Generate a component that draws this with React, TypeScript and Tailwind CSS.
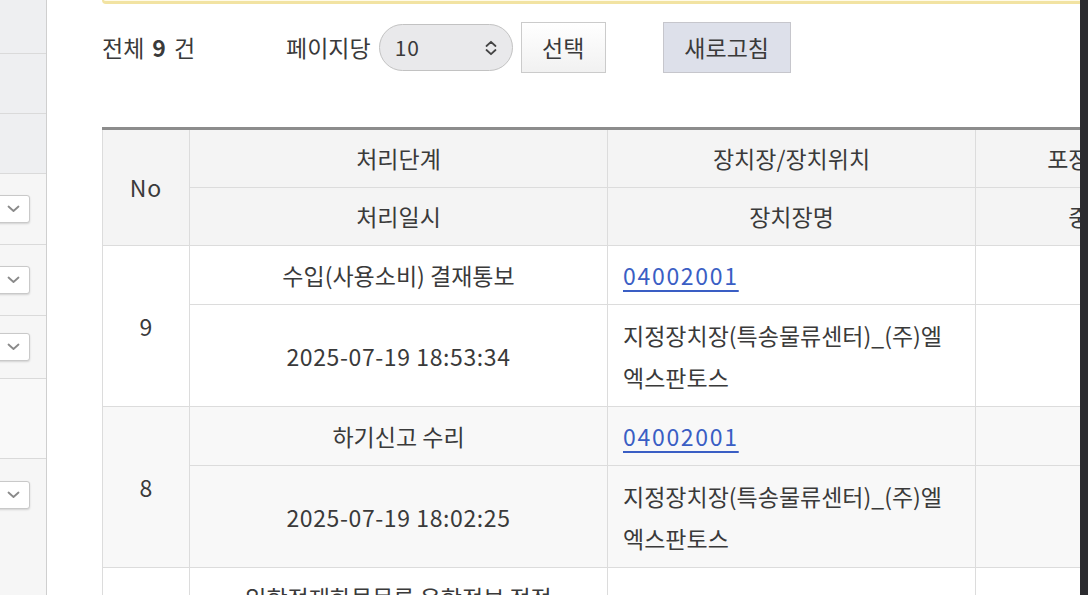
import React from 'react';

const font = { fontFamily: '"Noto Sans CJK KR", "Noto Sans", sans-serif' };

function SideSelect() {
  return (
    <div className="-ml-3 flex h-[28px] w-[42px] items-center justify-end rounded-[3px] border border-[#c9c9c9] bg-white pr-[9px] shadow-[0_1px_2px_rgba(0,0,0,0.15)]">
      <svg width="13" height="8" viewBox="0 0 13 8" fill="none">
        <path d="M1.5 1.5 6.5 6 11.5 1.5" stroke="#8a8a8a" strokeWidth="1.8" strokeLinecap="round" strokeLinejoin="round" />
      </svg>
    </div>
  );
}

function Sidebar() {
  return (
    <div className="flex h-full w-[47px] shrink-0 flex-col border-r border-[#cfcfcf] bg-[#f6f6f6]">
      <div className="h-[54px] border-b border-[#dadada] bg-[#eeeff1]" />
      <div className="h-[60px] border-b border-[#dadada] bg-[#eeeff1]" />
      <div className="h-[60px] border-b border-[#dadada] bg-[#eeeff1]" />
      <div className="flex h-[71px] items-center border-b border-[#dadada]">
        <SideSelect />
      </div>
      <div className="flex h-[71px] items-center border-b border-[#dadada]">
        <SideSelect />
      </div>
      <div className="flex h-[63px] items-center border-b border-[#dadada]">
        <SideSelect />
      </div>
      <div className="h-[80px] border-b border-[#dadada] bg-[#f9f9f9]" />
      <div className="flex-1 pt-[22px]">
        <SideSelect />
      </div>
    </div>
  );
}

function Toolbar() {
  return (
    <div className="flex h-[51px] items-center text-[23px] text-[#3a3a3a]">
      <div className="w-[184px] leading-none">
        전체<span className="mx-[8px] font-bold">9</span>건
      </div>
      <span className="mr-[8px]">페이지당</span>
      <div className="flex h-[47px] w-[134px] items-center justify-between rounded-full border-[1.5px] border-[#c2c2c2] bg-[#e9e9eb] pl-[15px] pr-[14px] text-[21px]">
        <span className="tracking-[1px]">10</span>
        <svg width="14" height="16" viewBox="0 0 14 16" fill="none">
          <path d="M2.5 6 7 1.8 11.5 6M2.5 10 7 14.2 11.5 10" stroke="#444" strokeWidth="1.8" strokeLinecap="round" strokeLinejoin="round" />
        </svg>
      </div>
      <button className="ml-[8px] h-[51px] w-[85px] border border-[#cbcbcb] bg-gradient-to-b from-white to-[#f1f1f1] text-[23px] text-[#3a3a3a]">
        선택
      </button>
      <button className="ml-[57px] h-[51px] w-[128px] border border-[#c6c6cc] bg-[#dde0ea] text-[23px] text-[#3a3a3a]">
        새로고침
      </button>
    </div>
  );
}

type Row = { no: number; step: string; date: string; code: string; name: string[]; bg: string };

const rows: Row[] = [
  { no: 9, step: '수입(사용소비) 결재통보', date: '2025-07-19 18:53:34', code: '04002001', name: ['지정장치장(특송물류센터)_(주)엘', '엑스판토스'], bg: 'bg-white' },
  { no: 8, step: '하기신고 수리', date: '2025-07-19 18:02:25', code: '04002001', name: ['지정장치장(특송물류센터)_(주)엘', '엑스판토스'], bg: 'bg-[#f8f8f8]' },
  { no: 7, step: '입항적재화물목록 운항정보 정정', date: '2025-07-19 17:40:12', code: '', name: [''], bg: 'bg-white' },
];

const th = 'border border-[#dcdcdc] bg-[#f4f4f4] px-2 py-2 text-center font-normal leading-[41px]';
const td = 'border border-[#dcdcdc] px-[15px] py-2 leading-[42px]';

function HistoryTable() {
  return (
    <table className="w-[1101px] table-fixed border-collapse border-t-[3px] border-t-[#8c8c8c] text-[23px] text-[#3a3a3a]">
      <colgroup>
        <col className="w-[87px]" />
        <col className="w-[418px]" />
        <col className="w-[368px]" />
        <col className="w-[228px]" />
      </colgroup>
      <thead>
        <tr>
          <th rowSpan={2} className={`${th} tracking-[1px]`}>
            No
          </th>
          <th className={th}>처리단계</th>
          <th className={th}>장치장/장치위치</th>
          <th className={th}>포장개수</th>
        </tr>
        <tr>
          <th className={th}>처리일시</th>
          <th className={th}>장치장명</th>
          <th className={th}>중량</th>
        </tr>
      </thead>
      <tbody>
        {rows.map((r) => (
          <React.Fragment key={r.no}>
            <tr className={r.bg}>
              <td rowSpan={2} className={`${td} text-center`}>
                {r.no}
              </td>
              <td className={`${td} text-center`}>{r.step}</td>
              <td className={td}>
                {r.code && (
                  <a href="#" className="tracking-[1.7px] text-[#3a5ec4] underline underline-offset-[5px]">
                    {r.code}
                  </a>
                )}
              </td>
              <td className={td} />
            </tr>
            <tr className={r.bg}>
              <td className={`${td} text-center tracking-[0.6px]`}>{r.date}</td>
              <td className={`${td} pt-[9px]`}>
                {r.name.map((n, i) => (
                  <div key={i}>{n}</div>
                ))}
              </td>
              <td className={td} />
            </tr>
          </React.Fragment>
        ))}
      </tbody>
    </table>
  );
}

export default function App() {
  return (
    <div className="flex h-[595px] w-[1088px] overflow-hidden bg-white" style={font}>
      <Sidebar />
      <div className="min-w-0 flex-1 overflow-hidden pl-[55px]">
        <div className="h-[4px] rounded-bl-[6px] border-b-[3px] border-l-[2px] border-[#f2e3a2] bg-[#fffbe8]" />
        <div className="mt-[18px]">
          <Toolbar />
        </div>
        <div className="mt-[54px]">
          <HistoryTable />
        </div>
      </div>
      <div className="h-full w-[8px] shrink-0 bg-[#2b2b2f]" />
    </div>
  );
}
